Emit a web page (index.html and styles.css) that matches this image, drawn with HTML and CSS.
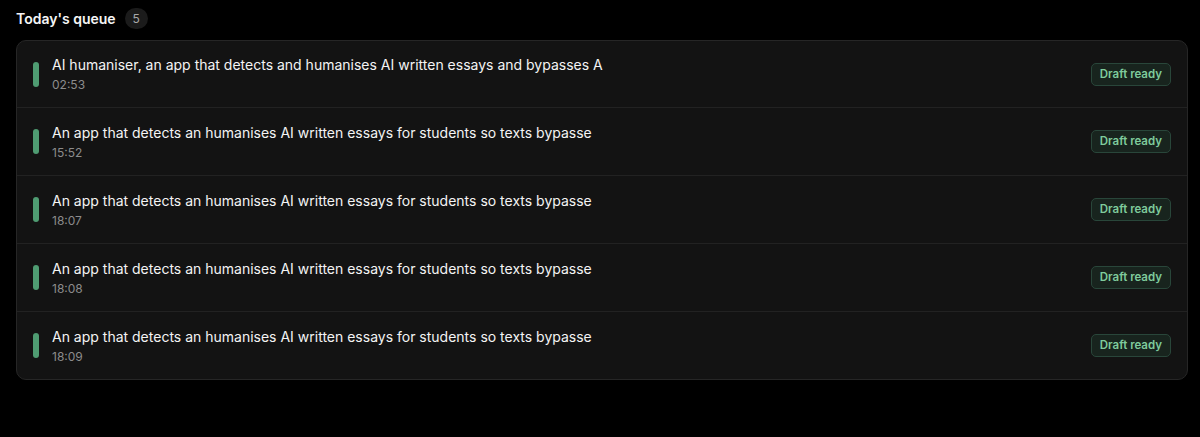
FILE: index.html
```html
<!DOCTYPE html>
<html lang="en">
<head>
	<meta charset="UTF-8">
	<title>Today's queue</title>
	<link rel="stylesheet" href="styles.css">
</head>
<body>
	<section class="queue">
		<header class="queue-head">
			<h2>Today's queue</h2>
			<span class="count">5</span>
		</header>
		<ul class="list">
			<li class="item">
				<span class="mark"></span>
				<div class="info">
					<p class="title">AI humaniser, an app that detects and humanises AI written essays and bypasses A</p>
					<p class="time">02:53</p>
				</div>
				<span class="status">Draft ready</span>
			</li>
			<li class="item">
				<span class="mark"></span>
				<div class="info">
					<p class="title">An app that detects an humanises AI written essays for students so texts bypasse</p>
					<p class="time">15:52</p>
				</div>
				<span class="status">Draft ready</span>
			</li>
			<li class="item">
				<span class="mark"></span>
				<div class="info">
					<p class="title">An app that detects an humanises AI written essays for students so texts bypasse</p>
					<p class="time">18:07</p>
				</div>
				<span class="status">Draft ready</span>
			</li>
			<li class="item">
				<span class="mark"></span>
				<div class="info">
					<p class="title">An app that detects an humanises AI written essays for students so texts bypasse</p>
					<p class="time">18:08</p>
				</div>
				<span class="status">Draft ready</span>
			</li>
			<li class="item">
				<span class="mark"></span>
				<div class="info">
					<p class="title">An app that detects an humanises AI written essays for students so texts bypasse</p>
					<p class="time">18:09</p>
				</div>
				<span class="status">Draft ready</span>
			</li>
		</ul>
	</section>
</body>
</html>
```

FILE: styles.css
```css
body{
	margin: 0;
	background: #000;
	color: #f2f2f2;
	font-family: Inter, "Noto Sans", sans-serif;
}
.queue{
	padding: 7px 12px 0 16px;
}
/* 标题 */
.queue-head{
	display: flex;
	align-items: center;
	gap: 9px;
	height: 22px;
	margin-bottom: 11px;
}
.queue-head h2{
	margin: 0;
	font-size: 14px;
	font-weight: 600;
	color: #f5f5f5;
}
.count{
	display: inline-block;
	min-width: 23px;
	height: 21px;
	line-height: 21px;
	border-radius: 11px;
	background: #1b1b1b;
	color: #a8a8a8;
	font-size: 12px;
	text-align: center;
}

/* 列表卡片 */
.list{
	list-style: none;
	margin: 0;
	padding: 0;
	background: #131313;
	border: 1px solid #262626;
	border-radius: 10px;
	overflow: hidden;
}
.item{
	display: flex;
	align-items: center;
	height: 67px;
	padding: 0 16px 0 16px;
	border-top: 1px solid #222;
}
.item:first-child{
	border-top: 0;
	height: 66px;
}
.mark{
	flex: none;
	width: 6px;
	height: 25px;
	margin-right: 13px;
	border-radius: 3px;
	background: #4f9c72;
}
.info{
	flex: 1;
	min-width: 0;
}
.title{
	margin: 0;
	font-size: 14px;
	line-height: 20px;
	color: #f4f4f4;
	white-space: nowrap;
}
.time{
	margin: 2px 0 0;
	font-size: 12px;
	line-height: 16px;
	color: #8c8c8c;
}
.status{
	flex: none;
	height: 21px;
	line-height: 21px;
	padding: 0 8px;
	border: 1px solid #29463a;
	border-radius: 5px;
	background: #18241e;
	color: #7fcb9c;
	font-size: 11.5px;
	font-weight: 600;
}
```
